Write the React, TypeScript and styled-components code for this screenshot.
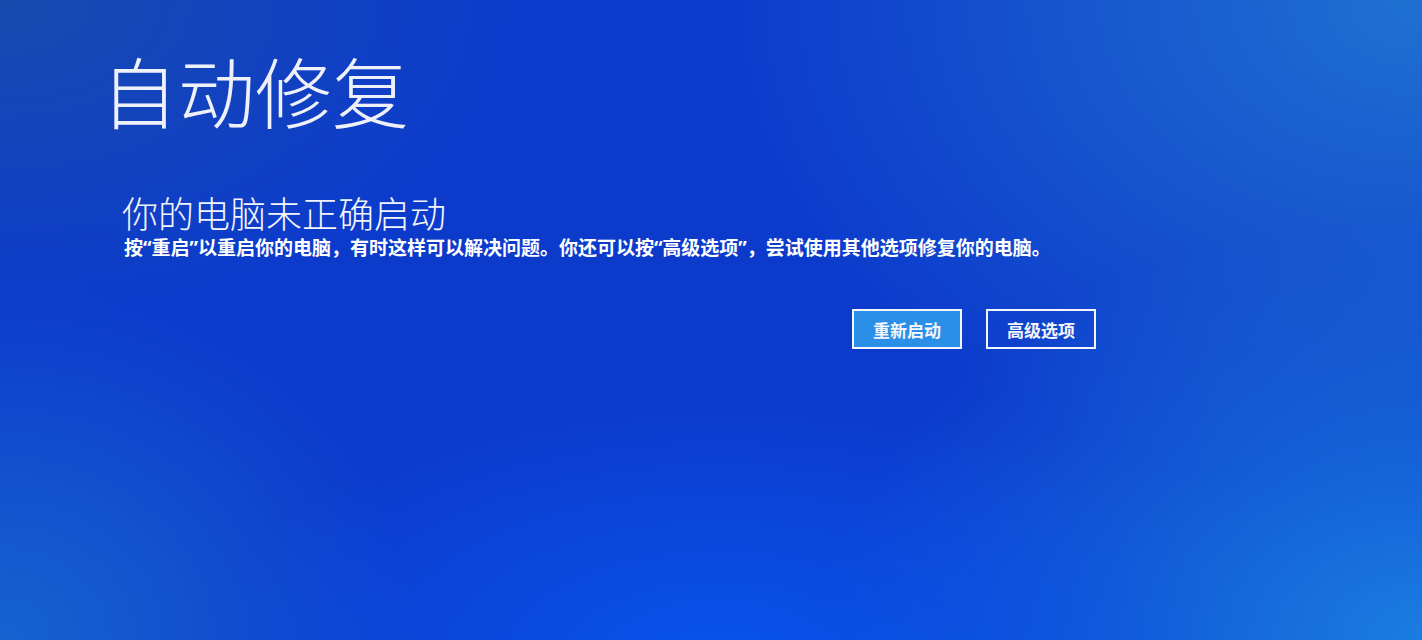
import React from 'react';
import styled, {createGlobalStyle} from 'styled-components';

const GlobalStyle = createGlobalStyle`
  html, body {
    margin: 0;
    padding: 0;
    height: 100%;
    overflow: hidden;
  }
  #root {
    height: 100%;
  }
`;

const cjk = `"Noto Sans CJK SC", "Noto Sans", sans-serif`;
// latin first so the quote marks stay narrow like on the real screen
const mixed = `"Noto Sans", "Noto Sans CJK SC", sans-serif`;

export default function App() {
    return (
        <>
            <GlobalStyle/>
            <Screen>
                <Title>自动修复</Title>
                <Content>
                    <Heading>你的电脑未正确启动</Heading>
                    <Message>
                        按“重启”以重启你的电脑，有时这样可以解决问题。你还可以按“高级选项”，尝试使用其他选项修复你的电脑。
                    </Message>
                    <Actions>
                        <ActionButton primary>重新启动</ActionButton>
                        <ActionButton>高级选项</ActionButton>
                    </Actions>
                </Content>
            </Screen>
        </>
    );
}

const Screen = styled.div`
  box-sizing: border-box;
  width: 100%;
  height: 100%;
  padding: 44px 0 0 101px;
  font-family: ${cjk};
  color: #ffffff;
  background:
    radial-gradient(ellipse 520px 260px at 720px 660px, rgba(8, 86, 240, 0.9), rgba(8, 86, 240, 0) 100%),
    radial-gradient(ellipse 700px 500px at 1422px 0px, rgba(34, 118, 210, 0.9), rgba(34, 118, 210, 0) 100%),
    radial-gradient(ellipse 600px 420px at 1422px 640px, rgba(28, 132, 228, 0.9), rgba(28, 132, 228, 0) 100%),
    radial-gradient(ellipse 420px 360px at 0px 640px, rgba(24, 106, 210, 0.85), rgba(24, 106, 210, 0) 100%),
    radial-gradient(ellipse 520px 320px at 0px 0px, rgba(26, 76, 172, 0.9), rgba(26, 76, 172, 0) 100%),
    #0c3bcc;
`;

const Title = styled.h1`
  margin: 0;
  font-size: 77px;
  font-weight: 300;
  line-height: 92px;
  color: #eef0fa;
`;

const Content = styled.div`
  width: 974px;
  margin: 54px 0 0 21px;
`;

const Heading = styled.h2`
  margin: 0;
  font-size: 36px;
  font-weight: 300;
  line-height: 44px;
  color: #f2f4fc;
`;

const Message = styled.p`
  margin: 2px 0 0;
  padding-left: 2px;
  font-family: ${mixed};
  font-size: 19px;
  font-weight: 700;
  line-height: 24px;
  white-space: nowrap;
`;

const Actions = styled.div`
  display: flex;
  justify-content: flex-end;
  align-items: flex-start;
  gap: 24px;
  margin-top: 49px;
`;

const ActionButton = styled.button<{ primary?: boolean }>`
  box-sizing: border-box;
  width: 110px;
  height: 40px;
  padding: 0;
  border: 2px solid #f4f6fc;
  background: ${props => props.primary ? '#2a8fe6' : 'transparent'};
  color: #f4f6fc;
  font-family: ${cjk};
  font-size: 17px;
  font-weight: 700;
  cursor: pointer;
`;
